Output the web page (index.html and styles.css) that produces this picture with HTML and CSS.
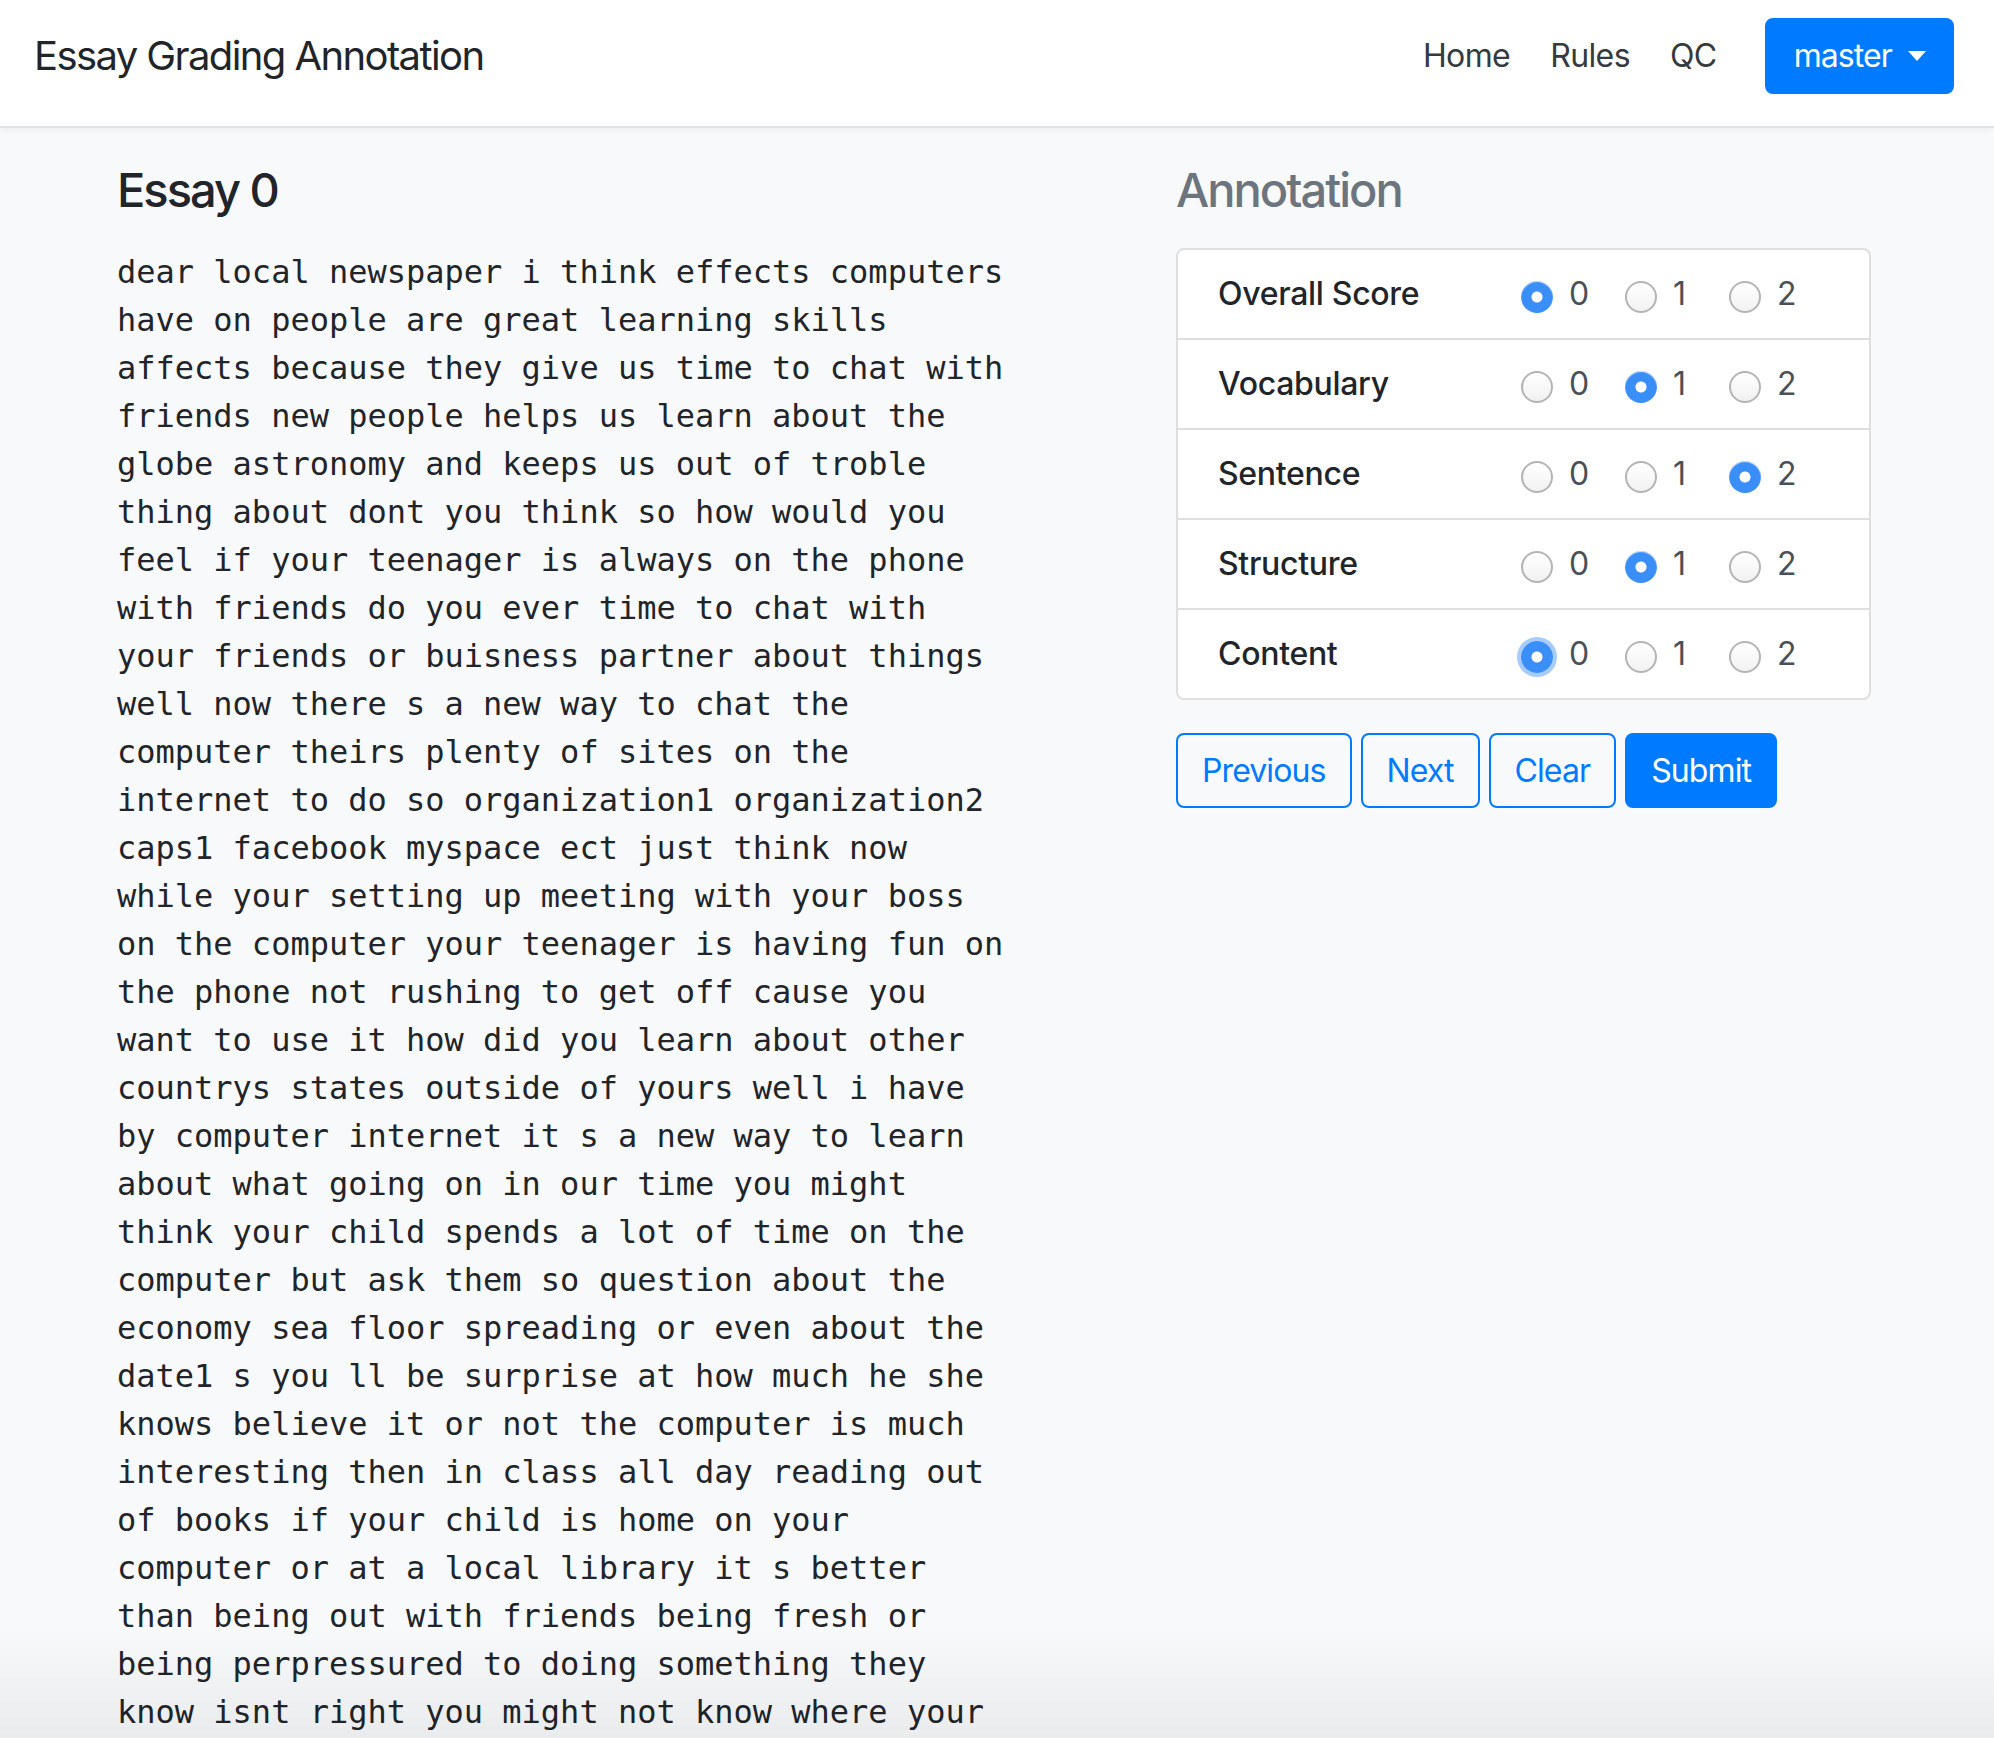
FILE: index.html
```html
<!DOCTYPE html>
<html lang="en">
<head>
<meta charset="utf-8">
<title>Essay Grading Annotation</title>
<link rel="stylesheet" href="styles.css">
</head>
<body>
<header class="navbar">
  <div class="brand">Essay Grading Annotation</div>
  <nav class="nav">
    <a class="nav-link" href="#">Home</a>
    <a class="nav-link" href="#">Rules</a>
    <a class="nav-link" href="#">QC</a>
  </nav>
  <button class="btn btn-primary btn-user" type="button">master<span class="caret"></span></button>
</header>

<main class="layout">
  <section class="col-essay">
    <h4 class="heading">Essay 0</h4>
    <p class="essay">dear local newspaper i think effects computers have on people are great learning skills affects because they give us time to chat with friends new people helps us learn about the globe astronomy and keeps us out of troble thing about dont you think so how would you feel if your teenager is always on the phone with friends do you ever time to chat with your friends or buisness partner about things well now there s a new way to chat the computer theirs plenty of sites on the internet to do so organization1 organization2 caps1 facebook myspace ect just think now while your setting up meeting with your boss on the computer your teenager is having fun on the phone not rushing to get off cause you want to use it how did you learn about other countrys states outside of yours well i have by computer internet it s a new way to learn about what going on in our time you might think your child spends a lot of time on the computer but ask them so question about the economy sea floor spreading or even about the date1 s you ll be surprise at how much he she knows believe it or not the computer is much interesting then in class all day reading out of books if your child is home on your computer or at a local library it s better than being out with friends being fresh or being perpressured to doing something they know isnt right you might not know where your child is caps2 forbidde in a hospital bed because of a drive by rather than your child on the computer learning chatting or just playing games safe and sound in your home or community place now i hope you have reached a point to understand and agree with me because computers can have great effects on you or child because it gives us time to chat with friends new people helps us learn about the globe and believe or not keeps us out of troble thank you for listening</p>
  </section>

  <section class="col-annot">
    <h4 class="heading heading-muted">Annotation</h4>
    <div class="card">
      <div class="score-row">
        <span class="score-label">Overall Score</span>
        <div class="options">
          <label class="option"><input type="radio" name="overall" checked><span>0</span></label>
          <label class="option"><input type="radio" name="overall"><span>1</span></label>
          <label class="option"><input type="radio" name="overall"><span>2</span></label>
        </div>
      </div>
      <div class="score-row">
        <span class="score-label">Vocabulary</span>
        <div class="options">
          <label class="option"><input type="radio" name="vocab"><span>0</span></label>
          <label class="option"><input type="radio" name="vocab" checked><span>1</span></label>
          <label class="option"><input type="radio" name="vocab"><span>2</span></label>
        </div>
      </div>
      <div class="score-row">
        <span class="score-label">Sentence</span>
        <div class="options">
          <label class="option"><input type="radio" name="sentence"><span>0</span></label>
          <label class="option"><input type="radio" name="sentence"><span>1</span></label>
          <label class="option"><input type="radio" name="sentence" checked><span>2</span></label>
        </div>
      </div>
      <div class="score-row">
        <span class="score-label">Structure</span>
        <div class="options">
          <label class="option"><input type="radio" name="structure"><span>0</span></label>
          <label class="option"><input type="radio" name="structure" checked><span>1</span></label>
          <label class="option"><input type="radio" name="structure"><span>2</span></label>
        </div>
      </div>
      <div class="score-row">
        <span class="score-label">Content</span>
        <div class="options">
          <label class="option"><input class="focused" type="radio" name="content" checked><span>0</span></label>
          <label class="option"><input type="radio" name="content"><span>1</span></label>
          <label class="option"><input type="radio" name="content"><span>2</span></label>
        </div>
      </div>
    </div>
    <div class="actions">
      <button class="btn btn-outline" type="button">Previous</button>
      <button class="btn btn-outline" type="button">Next</button>
      <button class="btn btn-outline" type="button">Clear</button>
      <button class="btn btn-primary" type="button">Submit</button>
    </div>
  </section>
</main>
<div class="bottom-shade"></div>
</body>
</html>
```

FILE: styles.css
```css
* { box-sizing: border-box; }

html, body {
  margin: 0;
  padding: 0;
}

body {
  background: #f8f9fa;
  color: #212529;
  font-family: Inter, Roboto, "Liberation Sans", sans-serif;
  font-size: 32px;
  line-height: 48px;
}

/* Navbar */
.navbar {
  display: flex;
  align-items: center;
  background: #fff;
  padding: 18px 40px 32px 34px;
  border-bottom: 2px solid #dee2e6;
  box-shadow: 0 3px 6px rgba(0, 0, 0, 0.04);
}

.brand {
  font-size: 40px;
  line-height: 60px;
  color: #212529;
  margin-right: auto;
  letter-spacing: -1.6px;
}

.nav {
  display: flex;
  gap: 40px;
  margin-right: 48px;
}

.nav-link {
  color: #343a40;
  text-decoration: none;
  font-size: 32px;
  letter-spacing: -0.6px;
}

.btn {
  font-family: inherit;
  font-size: 32px;
  line-height: 47px;
  padding: 12px 24px;
  border: 2px solid #007bff;
  border-radius: 8px;
  background: transparent;
  color: #007bff;
  cursor: pointer;
  letter-spacing: -0.9px;
}

.btn-primary {
  background: #007bff;
  color: #fff;
}

.btn-user {
  display: flex;
  align-items: center;
  padding: 12px 26px 12px 27px;
  line-height: 48px;
}

.caret {
  display: inline-block;
  width: 0;
  height: 0;
  margin-left: 16px;
  border-top: 10px solid #fff;
  border-left: 9.5px solid transparent;
  border-right: 9.5px solid transparent;
}

/* Layout */
.layout {
  display: grid;
  grid-template-columns: 1000px 695px;
  column-gap: 59px;
  padding: 33px 123px 0 117px;
}

.heading {
  margin: 0 0 29px;
  font-size: 47px;
  line-height: 58px;
  font-weight: 500;
  letter-spacing: -2px;
  color: #212529;
}

.heading-muted {
  color: #6c757d;
}

.essay {
  margin: 0;
  max-width: 896px;
  font-family: "DejaVu Sans Mono", "Liberation Mono", monospace;
  font-size: 32px;
  line-height: 48px;
  color: #212529;
}

/* Card */
.card {
  background: #fff;
  border: 2px solid rgba(0, 0, 0, 0.125);
  border-radius: 8px;
}

.score-row {
  display: flex;
  align-items: center;
  padding: 20px 40px;
}

.score-row + .score-row {
  border-top: 2px solid rgba(0, 0, 0, 0.125);
}

.score-label {
  flex: 0 0 303px;
  font-weight: 500;
  letter-spacing: -0.3px;
}

.options {
  display: flex;
}

.option {
  display: flex;
  align-items: center;
  width: 104px;
  color: #495057;
}

.option:last-child {
  width: auto;
}

.option span {
  margin-left: 16px;
}

.option input {
  appearance: none;
  -webkit-appearance: none;
  flex: 0 0 32px;
  margin: 5px 0 0;
  width: 32px;
  height: 32px;
  border-radius: 50%;
  border: 2px solid #b4b4b4;
  background: linear-gradient(#ffffff, #f1f1f1);
  box-shadow: inset 0 1px 1px rgba(255, 255, 255, 0.8);
}

.option input:checked {
  border: none;
  background: radial-gradient(circle, #ffffff 0 5px, #3a8ef7 6px);
}

.option input.focused {
  box-shadow: 0 0 0 4px rgba(59, 143, 246, 0.45);
}

/* Actions */
.actions {
  display: flex;
  gap: 9px;
  margin-top: 33px;
}

/* Bottom shade */
.bottom-shade {
  position: fixed;
  left: 0;
  right: 0;
  bottom: 0;
  height: 110px;
  background: linear-gradient(rgba(0, 0, 0, 0), rgba(0, 0, 0, 0.055));
  pointer-events: none;
}
```
